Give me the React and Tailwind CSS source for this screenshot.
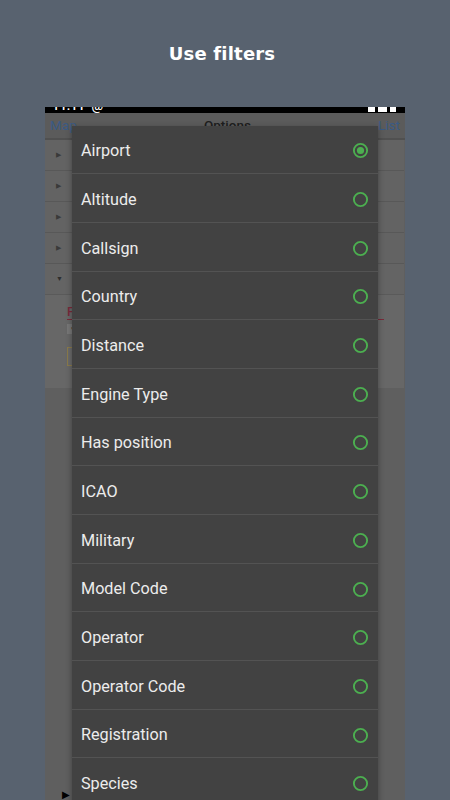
import React from "react";

const items = [
  "Airport",
  "Altitude",
  "Callsign",
  "Country",
  "Distance",
  "Engine Type",
  "Has position",
  "ICAO",
  "Military",
  "Model Code",
  "Operator",
  "Operator Code",
  "Registration",
  "Species",
];

function Radio({ checked }) {
  return (
    <svg width="17" height="17" viewBox="0 0 17 17" className="shrink-0">
      <circle cx="8.5" cy="8.5" r="6.6" fill="none" stroke="#4caf50" strokeWidth="1.9" />
      {checked && <circle cx="8.5" cy="8.5" r="3.6" fill="#4caf50" />}
    </svg>
  );
}

function BgRow({ open }) {
  return (
    <div className="h-[31px] border-b border-[#585858] bg-[#636363] flex items-center pl-[11px]">
      <span className="text-[#3a3a3a] text-[7px] leading-none">{open ? "▼" : "▶"}</span>
    </div>
  );
}

export default function App() {
  return (
    <div
      className="w-[450px] h-[800px] bg-[#58626f] flex flex-col overflow-hidden"
      style={{ fontFamily: "Roboto, 'Noto Sans', sans-serif" }}
    >
      <div
        className="pt-[42px] pr-[6px] text-center text-white text-[18px] font-bold leading-[24px] tracking-[0.2px]"
        style={{ fontFamily: "'DejaVu Sans', sans-serif" }}
      >
        Use filters
      </div>
      <div className="mt-[41px] ml-[45px] w-[360px] flex-1 relative overflow-hidden bg-[#5f5f5f] flex flex-col">
        {/* status bar, mostly cropped */}
        <div className="h-[6px] bg-black overflow-hidden shrink-0">
          <div className="-mt-[18px] h-[24px] flex items-end justify-between px-[7px] pb-[1px] text-white text-[13px] leading-none">
            <span className="font-medium">11:11 &nbsp;@</span>
            <span className="flex gap-[3px] items-end pr-[2px]">
              <span className="w-[7px] h-[10px] bg-white" />
              <span className="w-[9px] h-[10px] bg-white" />
              <span className="w-[6px] h-[10px] bg-white" />
            </span>
          </div>
        </div>
        {/* app bar */}
        <div className="h-[25px] bg-[#5b5b5b] flex items-center justify-between px-[5px] text-[13.5px] shrink-0">
          <span className="text-[#3a5a84]">Map</span>
          <span className="text-[#1e1e1e] font-medium -mt-[1px]">Options</span>
          <span className="text-[#3a5a84]">List</span>
        </div>
        <div className="h-[2px] bg-[#505050] shrink-0" />
        <div className="mr-[1px] flex flex-col shrink-0">
          <BgRow />
          <BgRow />
          <BgRow />
          <BgRow />
          <div className="h-[31px] bg-[#646464] flex items-center pl-[11px] border-b border-[#5a5a5a]">
            <span className="text-[#2e2e2e] text-[7px] leading-none">▼</span>
          </div>
          <div className="h-[93px] bg-[#676767] pl-[22px] pr-[20px] pt-[10px] flex flex-col">
            <span className="text-[#7a2a3a] text-[13px] leading-[13px] font-medium">F</span>
            <div className="h-[1px] bg-[#7a2a3a] mt-[1px]" />
            <div className="mt-[4px] w-[12px] h-[10px] bg-[#777] flex items-center justify-center">
              <span className="text-[#222] text-[6px] leading-none">▼</span>
            </div>
            <div className="mt-[13px] w-[40px] h-[19px] border border-[#8a7a4a] bg-[#6a6a6a]" />
          </div>
        </div>
        <div className="mt-auto pl-[17px] h-[10px] text-black text-[10px] leading-none">▶</div>

        {/* popup */}
        <div className="absolute left-[27px] top-[18.5px] w-[306px] bg-[#424242] shadow-[0_2px_6px_rgba(0,0,0,0.35)]">
          {items.map((it, i) => (
            <div
              key={it}
              className="h-[48.7px] border-b-[1.5px] border-[#535353] flex items-center justify-between pl-[9px] pr-[9px] pt-[3px]"
            >
              <span className="text-[#ececec] text-[16.2px] leading-none mt-[1px]">{it}</span>
              <Radio checked={i === 0} />
            </div>
          ))}
        </div>
      </div>
    </div>
  );
}
